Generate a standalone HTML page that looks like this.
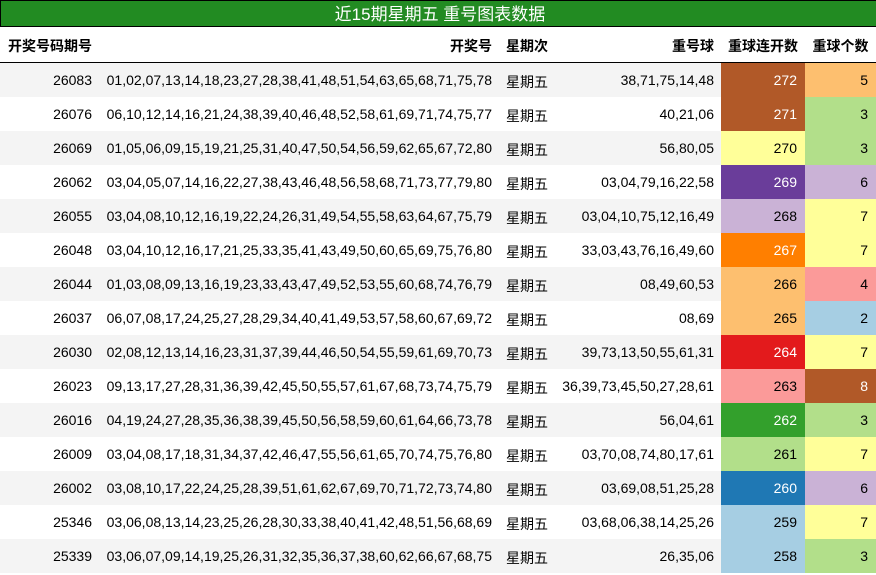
<!DOCTYPE html><html><head><meta charset="utf-8"><style>
body{margin:0;width:876px;height:574px;overflow:hidden;background:#fff;font-family:"Liberation Sans","Noto Sans CJK SC",sans-serif;font-size:14px;color:#000}
.t{position:absolute;left:0;top:0;width:874px;height:25px;background:#228b22;border:1px solid #000;color:#fff;font-size:17px;text-align:center;line-height:27px;padding-left:2px;box-sizing:content-box}
.r{position:absolute;left:0;width:876px;height:34px;line-height:34px}
.r div{position:absolute;top:0;height:34px}
.c1{left:0;width:92px;text-align:right}
.c2{left:100px;width:392px;text-align:right}
.r div.c3{left:506px;width:50px;top:2px;height:32px}
.c4{left:556px;width:158px;text-align:right}
.c5{left:721px;width:76px;padding-right:8px;text-align:right}
.c6{left:805px;width:63px;padding-right:8px;text-align:right}
.h{top:27px;height:35px;font-weight:bold;border-bottom:2px solid #000}
.h div{height:35px;line-height:38px}
.r.h div.c3{top:0;height:35px}
.w{color:#fff}
</style></head><body>
<div class="t">近15期星期五 重号图表数据</div>
<div class="r h"><div class="c1">开奖号码期号</div><div class="c2">开奖号</div><div class="c3">星期次</div><div class="c4">重号球</div><div class="c5" style="text-align:center;width:84px;padding:0">重球连开数</div><div class="c6" style="text-align:center;width:71px;padding:0">重球个数</div></div>
<div id="rows"></div>
<script>
var d=[
["26083","01,02,07,13,14,18,23,27,28,38,41,48,51,54,63,65,68,71,75,78","38,71,75,14,48","272","#b15928",1,"5","#fdbf6f",0],
["26076","06,10,12,14,16,21,24,38,39,40,46,48,52,58,61,69,71,74,75,77","40,21,06","271","#b15928",1,"3","#b2df8a",0],
["26069","01,05,06,09,15,19,21,25,31,40,47,50,54,56,59,62,65,67,72,80","56,80,05","270","#ffff99",0,"3","#b2df8a",0],
["26062","03,04,05,07,14,16,22,27,38,43,46,48,56,58,68,71,73,77,79,80","03,04,79,16,22,58","269","#6a3d9a",1,"6","#cab2d6",0],
["26055","03,04,08,10,12,16,19,22,24,26,31,49,54,55,58,63,64,67,75,79","03,04,10,75,12,16,49","268","#cab2d6",0,"7","#ffff99",0],
["26048","03,04,10,12,16,17,21,25,33,35,41,43,49,50,60,65,69,75,76,80","33,03,43,76,16,49,60","267","#ff7f00",1,"7","#ffff99",0],
["26044","01,03,08,09,13,16,19,23,33,43,47,49,52,53,55,60,68,74,76,79","08,49,60,53","266","#fdbf6f",0,"4","#fb9a99",0],
["26037","06,07,08,17,24,25,27,28,29,34,40,41,49,53,57,58,60,67,69,72","08,69","265","#fdbf6f",0,"2","#a6cee3",0],
["26030","02,08,12,13,14,16,23,31,37,39,44,46,50,54,55,59,61,69,70,73","39,73,13,50,55,61,31","264","#e31a1c",1,"7","#ffff99",0],
["26023","09,13,17,27,28,31,36,39,42,45,50,55,57,61,67,68,73,74,75,79","36,39,73,45,50,27,28,61","263","#fb9a99",0,"8","#b15928",1],
["26016","04,19,24,27,28,35,36,38,39,45,50,56,58,59,60,61,64,66,73,78","56,04,61","262","#33a02c",1,"3","#b2df8a",0],
["26009","03,04,08,17,18,31,34,37,42,46,47,55,56,61,65,70,74,75,76,80","03,70,08,74,80,17,61","261","#b2df8a",0,"7","#ffff99",0],
["26002","03,08,10,17,22,24,25,28,39,51,61,62,67,69,70,71,72,73,74,80","03,69,08,51,25,28","260","#1f78b4",1,"6","#cab2d6",0],
["25346","03,06,08,13,14,23,25,26,28,30,33,38,40,41,42,48,51,56,68,69","03,68,06,38,14,25,26","259","#a6cee3",0,"7","#ffff99",0],
["25339","03,06,07,09,14,19,25,26,31,32,35,36,37,38,60,62,66,67,68,75","26,35,06","258","#a6cee3",0,"3","#b2df8a",0]];
var h="";d.forEach(function(x,i){h+='<div class="r" style="top:'+(63+i*34)+'px;background:'+(i%2?'#fff':'#f4f4f4')+'"><div class="c1">'+x[0]+'</div><div class="c2">'+x[1]+'</div><div class="c3">星期五</div><div class="c4">'+x[2]+'</div><div class="c5'+(x[5]?' w':'')+'" style="background:'+x[4]+'">'+x[3]+'</div><div class="c6'+(x[8]?' w':'')+'" style="background:'+x[7]+'">'+x[6]+'</div></div>';});
document.getElementById("rows").innerHTML=h;
</script>
</body></html>
